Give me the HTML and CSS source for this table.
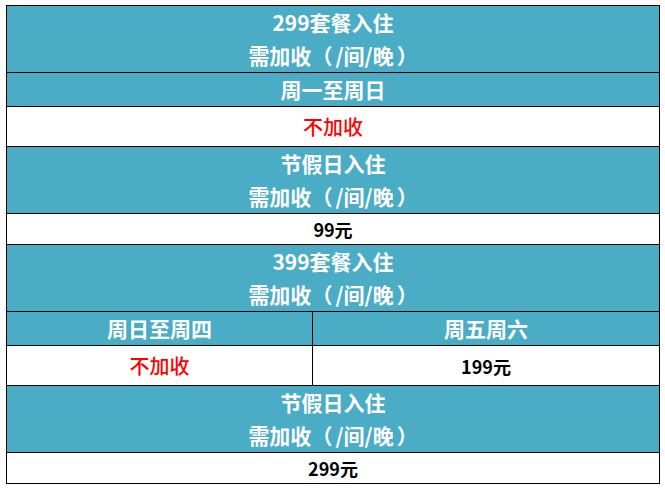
FILE: index.html
```html
<!DOCTYPE html>
<html lang="zh">
<head>
<meta charset="utf-8">
<link rel="stylesheet" href="styles.css">
</head>
<body>
<table class="price">
  <colgroup><col class="c1"><col class="c2"></colgroup>
  <tr class="h2 head"><td colspan="2"><div>299套餐入住</div><div>需加收<span class="lp">（</span>/间/晚<span class="rp">）</span></div></td></tr>
  <tr class="h34 head"><td colspan="2">周一至周日</td></tr>
  <tr class="h40"><td colspan="2" class="red">不加收</td></tr>
  <tr class="h2 head"><td colspan="2"><div>节假日入住</div><div>需加收<span class="lp">（</span>/间/晚<span class="rp">）</span></div></td></tr>
  <tr class="h31"><td colspan="2" class="val">99元</td></tr>
  <tr class="h2 head"><td colspan="2"><div>399套餐入住</div><div>需加收<span class="lp">（</span>/间/晚<span class="rp">）</span></div></td></tr>
  <tr class="h34 head"><td>周日至周四</td><td>周五周六</td></tr>
  <tr class="h40"><td class="red">不加收</td><td class="val">199元</td></tr>
  <tr class="h2 head"><td colspan="2"><div>节假日入住</div><div>需加收<span class="lp">（</span>/间/晚<span class="rp">）</span></div></td></tr>
  <tr class="h31"><td colspan="2" class="val">299元</td></tr>
</table>
</body>
</html>
```

FILE: styles.css
```css
html, body {
  margin: 0;
  padding: 0;
  background: #fff;
}
body {
  padding: 5px 0 0 6px;
  font-family: "Noto Sans CJK SC", "Noto Sans", sans-serif;
}
.price {
  border-collapse: collapse;
  width: 653px;
  table-layout: fixed;
}
.c1 { width: 306px; }
.c2 { width: 347px; }
.price td {
  border: 1px solid #000;
  padding: 0;
  text-align: center;
  vertical-align: middle;
}
.head td {
  background: #4bacc6;
  color: #fff;
  font-weight: bold;
  font-size: 21px;
  line-height: 33px;
}
.lp {
  margin-right: 3px;
}
.rp {
  margin-left: 3px;
}
.h2 td { height: 66px; }
.h34 td { height: 33px; }
.h40 td { height: 39px; }
.h31 td { height: 30px; }
.red {
  color: #ff0000;
  font-size: 20px;
  font-weight: 500;
}
.val {
  color: #000;
  font-weight: bold;
  font-size: 18px;
}
```
